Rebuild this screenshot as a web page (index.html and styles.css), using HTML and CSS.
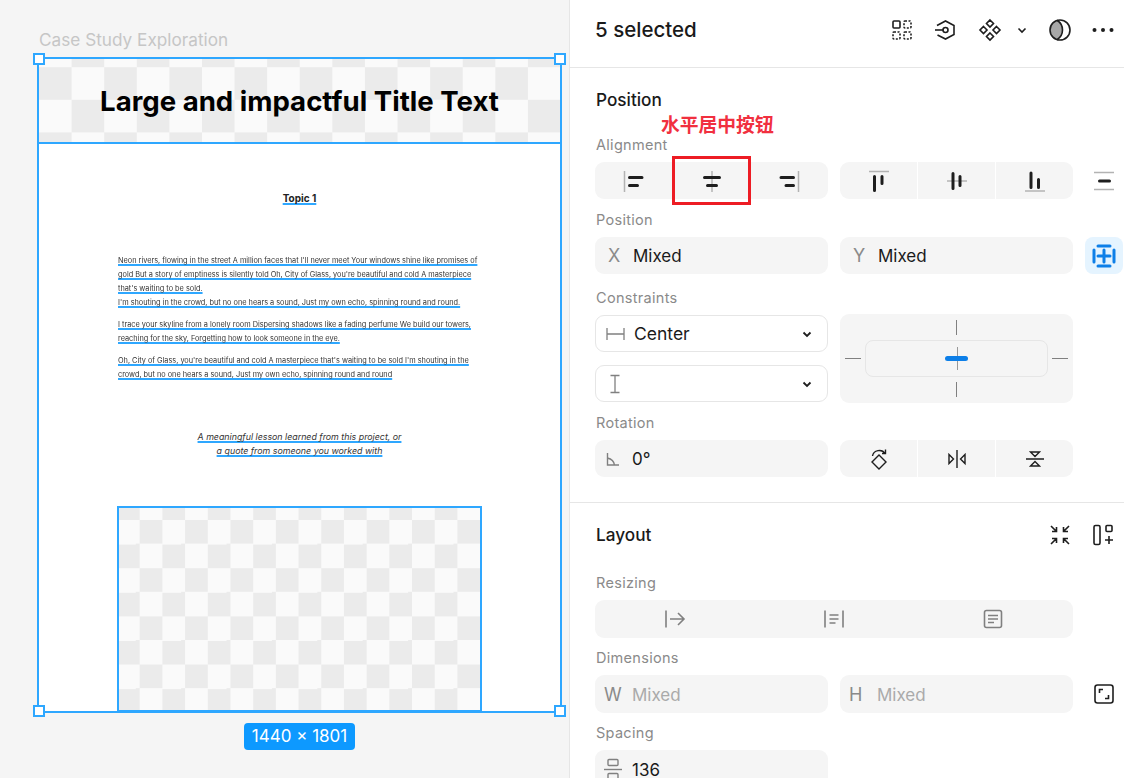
FILE: index.html
```html
<!DOCTYPE html>
<html>
<head>
    <meta charset="utf-8">
    <title>Position panel</title>
    <link rel="stylesheet" href="styles.css">
</head>
<body>
    <div class="app">
        <main class="canvas">
            <div class="frame-name">Case Study Exploration</div>
            <div class="frame">
                <header class="frame-title"><h1>Large and impactful Title Text</h1></header>
                <h2 class="topic">Topic 1</h2>
                <div class="copy">
                    <p>Neon rivers, flowing in the street A million faces that I'll never meet Your windows shine like promises of<br>gold But a story of emptiness is silently told Oh, City of Glass, you're beautiful and cold A masterpiece<br>that's waiting to be sold.<br>I'm shouting in the crowd, but no one hears a sound, Just my own echo, spinning round and round.</p>
                    <p>I trace your skyline from a lonely room Dispersing shadows like a fading perfume We build our towers,<br>reaching for the sky, Forgetting how to look someone in the eye.</p>
                    <p>Oh, City of Glass, you're beautiful and cold A masterpiece that's waiting to be sold I'm shouting in the<br>crowd, but no one hears a sound, Just my own echo, spinning round and round</p>
                </div>
                <p class="quote">A meaningful lesson learned from this project, or<br>a quote from someone you worked with</p>
                <div class="picture"></div>
                <span class="handle tl"></span>
                <span class="handle tr"></span>
                <span class="handle bl"></span>
                <span class="handle br"></span>
            </div>
            <div class="size-badge">1440 × 1801</div>
        </main>

        <aside class="panel">
            <header class="panel-head">
                <div class="panel-title">5 selected</div>
                <div class="head-icons">
                    <svg class="ico i-grid" width="24" height="24" viewBox="0 0 24 24"><rect x="3" y="3" width="7" height="7" rx="1"/><rect x="14" y="3" width="7" height="7" rx="1" stroke-dasharray="2 1.5"/><rect x="3" y="14" width="7" height="7" rx="1" stroke-dasharray="2 1.5"/><rect x="14" y="14" width="7" height="7" rx="1" stroke-dasharray="2 1.5"/></svg>
                    <svg class="ico i-hex" width="24" height="24" viewBox="0 0 24 24"><path d="M4 7.500 12.500 3 21 7.500V16.500L12.500 21 4.500 17"/><circle cx="12.500" cy="12" r="2.500"/><path d="M2 12H10"/></svg>
                    <svg class="ico i-comp" width="24" height="24" viewBox="0 0 24 24"><path d="M12 2 15.500 5.500 12 9 8.500 5.500ZM12 15 15.500 18.500 12 22 8.500 18.500ZM5.500 8.500 9 12 5.500 15.500 2 12ZM18.500 8.500 22 12 18.500 15.500 15 12Z"/></svg>
                    <svg class="ico i-chev" width="10" height="24" viewBox="0 0 10 24"><path d="M1.500 10.500 5 14 8.500 10.500"/></svg>
                    <svg class="ico i-mask" width="24" height="24" viewBox="0 0 24 24"><path class="fill-gray" d="M9 2.300C5 3.800 2 7.500 2 12s3 8.200 7 9.700C12.500 19.500 14.500 16 14.500 12S12.500 4.500 9 2.300Z"/><circle cx="12" cy="12" r="10"/><path d="M9 2.300C12.500 4.500 14.500 8 14.500 12S12.500 19.500 9 21.700"/></svg>
                    <svg class="ico-solid i-more" width="24" height="24" viewBox="0 0 24 24"><circle cx="3.500" cy="12" r="2"/><circle cx="12" cy="12" r="2"/><circle cx="20.500" cy="12" r="2"/></svg>
                </div>
            </header>

            <section class="section">
                <h3 class="section-title">Position</h3>
                <div class="field-label">Alignment</div>
                <div class="row">
                    <div class="col seg">
                        <button class="seg-btn"><svg width="24" height="24" viewBox="0 0 24 24"><path class="guide" d="M2.500 2V23"/><path class="bar" d="M7.500 8.500H20M7.500 16.500H15.500"/></svg></button>
                        <button class="seg-btn"><svg width="24" height="24" viewBox="0 0 24 24"><path class="guide" d="M12 2V23"/><path class="bar" d="M4.500 8.500H19.500M7.500 16.500H16.500"/></svg></button>
                        <button class="seg-btn"><svg width="24" height="24" viewBox="0 0 24 24"><path class="guide" d="M21.500 2V23"/><path class="bar" d="M4 8.500H16.500M9 16.500H16.500"/></svg></button>
                    </div>
                    <div class="col seg split">
                        <button class="seg-btn"><svg width="24" height="24" viewBox="0 0 24 24"><path class="guide" d="M2 2.500H22"/><path class="bar" d="M7.500 7.500V21.500M15 7.500V14.500"/></svg></button>
                        <button class="seg-btn"><svg width="24" height="24" viewBox="0 0 24 24"><path class="guide" d="M2 12H22"/><path class="bar" d="M8 4.500V19.500M15 7.500V16.500"/></svg></button>
                        <button class="seg-btn"><svg width="24" height="24" viewBox="0 0 24 24"><path class="guide" d="M2 22H22"/><path class="bar" d="M8 4V18.500M15.500 10.500V18.500"/></svg></button>
                    </div>
                    <div class="side-btn"><svg width="24" height="24" viewBox="0 0 24 24"><path class="guide" d="M2 3.500H22M2 20.500H22"/><path class="bar" d="M7.500 12H17.500"/></svg></div>
                </div>

                <div class="field-label">Position</div>
                <div class="row">
                    <div class="col input"><span class="prefix">X</span><span class="value">Mixed</span></div>
                    <div class="col input"><span class="prefix">Y</span><span class="value">Mixed</span></div>
                    <div class="side-btn active"><svg width="26" height="26" viewBox="0 0 26 26"><path d="M3 7V19M23 7V19M7 3H19M7 23H19M7 13H19M13 7V19"/></svg></div>
                </div>

                <div class="field-label gap-top">Constraints</div>
                <div class="row">
                    <div class="col stack">
                        <div class="select">
                            <svg class="sel-ico" width="20" height="20" viewBox="0 0 20 20"><path d="M2 4V16M19 4V16M2 10H19"/></svg>
                            <span class="sel-text">Center</span>
                            <svg class="ico i-caret" width="10" height="10" viewBox="0 0 10 10"><path d="M1.500 3.500 5 7 8.500 3.500"/></svg>
                        </div>
                        <div class="select">
                            <svg class="sel-ico" width="20" height="20" viewBox="0 0 20 20"><path d="M5.500 1.500H14.500M5.500 18.500H14.500M10 1.500V18.500"/></svg>
                            <span class="sel-text"></span>
                            <svg class="ico i-caret" width="10" height="10" viewBox="0 0 10 10"><path d="M1.500 3.500 5 7 8.500 3.500"/></svg>
                        </div>
                    </div>
                    <div class="col pin-box">
                        <span class="pin pin-t"></span>
                        <div class="pin-mid">
                            <span class="pin pin-h"></span>
                            <div class="pin-inner"><span class="pin-cross"></span><span class="pin-blue"></span></div>
                            <span class="pin pin-h"></span>
                        </div>
                        <span class="pin pin-t"></span>
                    </div>
                </div>

                <div class="field-label tight">Rotation</div>
                <div class="row">
                    <div class="col input"><svg class="prefix-ico" width="16" height="16" viewBox="0 0 16 16"><path d="M2.500 2V14H14M2.500 7C6.500 8 9 10.500 9.500 14"/></svg><span class="value">0°</span></div>
                    <div class="col seg split">
                        <button class="seg-btn"><svg class="ico thin" width="24" height="24" viewBox="0 0 24 24"><path d="M12 8 19 15 12 22 5 15Z"/><path d="M5.500 9C6.500 3 15 1.500 18 6.500M18.500 2.500V6.500H15"/></svg></button>
                        <button class="seg-btn"><svg class="ico thin" width="24" height="24" viewBox="0 0 24 24"><path d="M12 3V21M4 7.500 8.500 12 4 16.500ZM20 7.500 15.500 12 20 16.500Z"/></svg></button>
                        <button class="seg-btn"><svg class="ico thin" width="24" height="24" viewBox="0 0 24 24"><path d="M3 12H21M7.500 5H16.500L12 9.500ZM7.500 19H16.500L12 14.500Z"/></svg></button>
                    </div>
                </div>
            </section>

            <section class="section section-layout">
                <div class="section-head">
                    <h3 class="section-title">Layout</h3>
                    <div class="layout-icons">
                        <svg class="ico" width="22" height="22" viewBox="0 0 22 22"><path d="M2 2 7.500 7.500M7.500 3V7.500H3M20 2 14.500 7.500M14.500 3V7.500H19M2 20 7.500 14.500M7.500 19V14.500H3M20 20 14.500 14.500M14.500 19V14.500H19"/></svg>
                        <svg class="ico" width="22" height="22" viewBox="0 0 22 22"><rect x="2" y="1.500" width="6" height="19" rx="1.500"/><rect x="14" y="1.500" width="6" height="6" rx="1"/><path d="M17 12V20M13 16H21"/></svg>
                    </div>
                </div>
                <div class="field-label">Resizing</div>
                <div class="row">
                    <div class="resize-bar">
                        <button class="seg-btn"><svg class="ico-gray" width="22" height="22" viewBox="0 0 22 22"><path d="M2 2.500V19.500M6 11H20M14 5 20 11 14 17"/></svg></button>
                        <button class="seg-btn"><svg class="ico-gray" width="22" height="22" viewBox="0 0 22 22"><path d="M2 2.500V19.500M20 2.500V19.500M6.500 7H15.500M6.500 11H15.500M6.500 15H12.500"/></svg></button>
                        <button class="seg-btn"><svg class="ico-gray" width="22" height="22" viewBox="0 0 22 22"><rect x="2.500" y="2.500" width="17" height="17" rx="2"/><path d="M6 7.500H16M6 11H16M6 14.500H12"/></svg></button>
                    </div>
                </div>
                <div class="field-label tight">Dimensions</div>
                <div class="row">
                    <div class="col input tall"><span class="prefix wide">W</span><span class="value muted">Mixed</span></div>
                    <div class="col input tall"><span class="prefix wide">H</span><span class="value muted">Mixed</span></div>
                    <div class="side-btn"><svg class="ico" width="22" height="22" viewBox="0 0 22 22"><rect x="2" y="2" width="18" height="18" rx="2.500"/><path d="M6.500 10V6.500H10M15.500 12V15.500H12"/></svg></div>
                </div>
                <div class="field-label tight">Spacing</div>
                <div class="row">
                    <div class="col input tall"><svg class="prefix-ico spacing" width="20" height="24" viewBox="0 0 20 24"><rect x="5" y="1.500" width="10" height="6" rx="1"/><path d="M1 11.500H19"/><rect x="5" y="15.500" width="10" height="6" rx="1"/></svg><span class="value">136</span></div>
                </div>
            </section>

            <div class="note-text">水平居中按钮</div>
            <div class="note-box"></div>
        </aside>
    </div>
</body>
</html>
```

FILE: styles.css
```css
* {
    box-sizing: border-box;
}

html, body {
    margin: 0;
    height: 100%;
    overflow: hidden;
}

body {
    font-family: Inter, "Noto Sans CJK SC", sans-serif;
    color: #1e1e1e;
    background: white;
}

.app {
    display: flex;
    width: 1124px;
    height: 778px;
    overflow: hidden;
}

/* canvas side */
.canvas {
    position: relative;
    width: 570px;
    flex: none;
    background: #f5f5f5;
    border-right: 1px solid #e6e6e6;
}

.frame-name {
    position: absolute;
    left: 39px;
    top: 30px;
    font-size: 17.200px;
    line-height: 20px;
    color: #c6c6c6;
}

.frame {
    position: absolute;
    left: 37px;
    top: 57px;
    width: 525px;
    height: 656px;
    background: white;
    border: 2px solid #2ea7ff;
}

.frame-title {
    display: flex;
    align-items: center;
    justify-content: center;
    height: 85px;
    background: repeating-conic-gradient(#ebebeb 0 25%, #fafafa 0 50%) 0 -24.400px / 65.200px 65.200px;
    border-bottom: 2px solid #2ea7ff;
}

.frame-title h1 {
    margin: 0;
    font-size: 27.600px;
    line-height: 34px;
    font-weight: 700;
    color: black;
}

.topic {
    margin: 47px 0 0;
    font-size: 10px;
    line-height: 14px;
    font-weight: 700;
    text-align: center;
    color: #222;
    text-decoration: underline 2px #2ea7ff;
    text-decoration-skip-ink: none;
    text-underline-offset: 0.500px;
}

.copy {
    margin: 49px 0 0;
    padding: 0 79px;
    filter: blur(0.300px);
}

.copy p {
    margin: 0 0 8px;
    font-size: 7.330px;
    line-height: 14px;
    white-space: nowrap;
    color: #333;
    text-decoration: underline 2px #2ea7ff;
    text-decoration-skip-ink: none;
    text-underline-offset: 0.500px;
}

.quote {
    margin: 48px 0 0;
    font-size: 8.830px;
    line-height: 14px;
    font-style: italic;
    text-align: center;
    color: #333;
    text-decoration: underline 2px #2ea7ff;
    text-decoration-skip-ink: none;
    text-underline-offset: 0.500px;
}

.picture {
    position: absolute;
    left: 78px;
    bottom: -1px;
    width: 365px;
    height: 206px;
    border: 2px solid #2ea7ff;
    background: repeating-conic-gradient(#ebebeb 0 25%, #fafafa 0 50%) -2px 12px / 45.400px 48.200px;
}

.handle {
    position: absolute;
    width: 12px;
    height: 12px;
    background: white;
    border: 2px solid #2ea7ff;
}

.handle.tl { left: -6px; top: -6px; }
.handle.tr { right: -6px; top: -6px; }
.handle.bl { left: -6px; bottom: -6px; }
.handle.br { right: -6px; bottom: -6px; }

.size-badge {
    position: absolute;
    left: 244px;
    top: 723px;
    width: 111px;
    height: 27px;
    border-radius: 4px;
    background: #0d99ff;
    color: white;
    font-size: 17px;
    line-height: 27px;
    text-align: center;
}

/* right panel */
.panel {
    position: relative;
    flex: 1;
    height: 778px;
    overflow: hidden;
}

.panel-head {
    display: flex;
    align-items: center;
    justify-content: space-between;
    height: 68px;
    padding: 0 9px 8px 25px;
    border-bottom: 1px solid #e6e6e6;
}

.panel-title {
    font-size: 20.500px;
    font-weight: 500;
    line-height: 24px;
    color: #1a1a1a;
}

.head-icons {
    display: flex;
    align-items: center;
}

.ico, .ico-gray, .sel-ico, .prefix-ico {
    fill: none;
    stroke: #1e1e1e;
    stroke-width: 1.600;
}

.ico.thin {
    stroke-width: 1.400;
}

.ico-solid {
    fill: #1e1e1e;
}

.fill-gray {
    fill: #a8a8a8;
    stroke: none;
}

.ico-gray, .sel-ico, .prefix-ico {
    stroke: #808080;
}

.head-icons svg {
    display: block;
}

.i-hex { margin-left: 19px; }
.i-comp { margin-left: 21px; }
.i-chev { margin-left: 15px; }
.i-mask { margin-left: 21px; }
.i-more { margin-left: 19px; }

.section {
    padding: 22px 0 25px 25px;
    border-bottom: 1px solid #e6e6e6;
}

.section-title {
    margin: 0 0 26px 1px;
    font-size: 17.200px;
    line-height: 20px;
    font-weight: 500;
    color: #1a1a1a;
}

.field-label {
    margin: 12px 0 8px 1px;
    height: 18px;
    font-size: 14.500px;
    line-height: 18px;
    letter-spacing: 0.300px;
    color: #8a8a8a;
}

.field-label.gap-top {
    margin: 15px 0 7px 1px;
}

.field-label.tight {
    margin-top: 11px;
}

.row {
    display: flex;
    gap: 12px;
}

.col {
    width: 233px;
    flex: none;
}

.seg {
    display: flex;
    height: 37px;
    background: #f5f5f5;
    border-radius: 9px;
    overflow: hidden;
}

.seg-btn {
    flex: 1;
    display: flex;
    align-items: center;
    justify-content: center;
    padding: 0;
    border: none;
    background: none;
}

.seg.split .seg-btn + .seg-btn {
    border-left: 1px solid white;
}

.guide {
    fill: none;
    stroke: #b3b3b3;
    stroke-width: 1.500;
}

.bar {
    fill: none;
    stroke: #1e1e1e;
    stroke-width: 3;
    stroke-linecap: round;
}

.side-btn {
    width: 38px;
    height: 37px;
    flex: none;
    display: flex;
    align-items: center;
    justify-content: center;
    border-radius: 8px;
}

.side-btn.active {
    background: #e5f4ff;
}

.side-btn.active path {
    fill: none;
    stroke: #0d7fe8;
    stroke-width: 3;
    stroke-linecap: round;
}

.input {
    display: flex;
    align-items: center;
    height: 37px;
    background: #f5f5f5;
    border-radius: 9px;
}

.input.tall {
    height: 38px;
    padding-top: 1px;
}

.prefix {
    width: 38px;
    padding-left: 13px;
    font-size: 18px;
    color: #8a8a8a;
}

.prefix.wide {
    width: 37px;
    padding-left: 9px;
}

.prefix-ico {
    width: 16px;
    margin: 0 11px 0 10px;
    stroke-width: 1.400;
}

.prefix-ico.spacing {
    width: 20px;
    margin: 0 9px 0 8px;
}

.value {
    font-size: 17px;
    color: #1a1a1a;
}

.value.muted {
    color: #aaa;
}

.stack {
    display: flex;
    flex-direction: column;
    gap: 13px;
    padding-top: 1px;
}

.select {
    display: flex;
    align-items: center;
    height: 37px;
    padding: 0 15px 0 9px;
    background: white;
    border: 1px solid #e6e6e6;
    border-radius: 9px;
}

.sel-ico {
    stroke-width: 1.300;
    flex: none;
}

.sel-text {
    flex: 1;
    margin-left: 9px;
    font-size: 17.500px;
    color: #1a1a1a;
}

.i-caret {
    flex: none;
    stroke-width: 1.800;
}

.pin-box {
    display: flex;
    flex-direction: column;
    align-items: center;
    justify-content: space-between;
    height: 89px;
    padding: 6px 0;
    background: #f5f5f5;
    border-radius: 9px;
}

.pin {
    display: block;
    background: #808080;
}

.pin-t {
    width: 1px;
    height: 15px;
}

.pin-h {
    width: 16px;
    height: 1px;
}

.pin-mid {
    display: flex;
    align-items: center;
    gap: 4px;
    align-self: stretch;
    justify-content: center;
}

.pin-inner {
    position: relative;
    display: flex;
    align-items: center;
    justify-content: center;
    width: 183px;
    height: 37px;
    border: 1px solid #e6e6e6;
    border-radius: 8px;
}

.pin-cross {
    position: absolute;
    left: 50%;
    top: 6px;
    width: 1px;
    height: 23px;
    background: #999;
}

.pin-blue {
    position: relative;
    width: 23px;
    height: 5px;
    border-radius: 3px;
    background: #0d7fe8;
}

.section-layout {
    padding-top: 21px;
    border-bottom: none;
}

.section-layout .section-title {
    margin-bottom: 0;
}

.section-head {
    display: flex;
    align-items: center;
    justify-content: space-between;
    height: 22px;
    padding-right: 10px;
    margin-bottom: 28px;
}

.layout-icons {
    display: flex;
    gap: 21px;
}

.layout-icons svg {
    display: block;
}

.resize-bar {
    display: flex;
    width: 478px;
    height: 38px;
    background: #f5f5f5;
    border-radius: 9px;
}

/* red annotation on top of the panel */
.note-text {
    position: absolute;
    left: 91px;
    top: 114px;
    font-size: 18.800px;
    line-height: 23px;
    font-weight: 700;
    color: #f1303f;
    white-space: nowrap;
}

.note-box {
    position: absolute;
    left: 102px;
    top: 156px;
    width: 79px;
    height: 49px;
    border: 3px solid #ed1c24;
}
```
